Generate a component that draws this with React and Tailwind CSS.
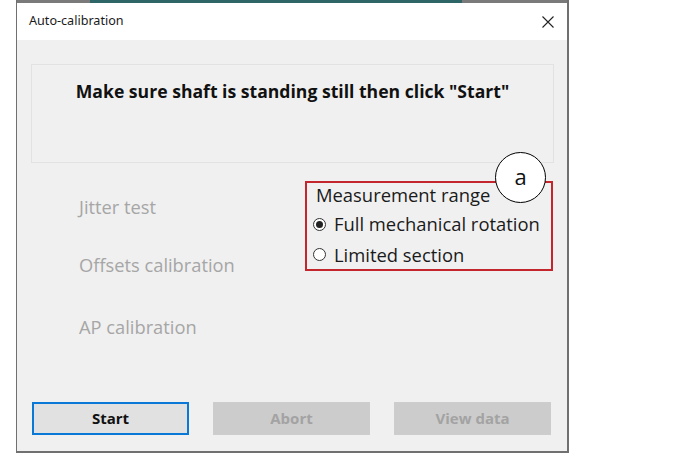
export default function App() {
  const font = { fontFamily: '"Open Sans", "Noto Sans", sans-serif' };
  return (
    <div className="w-[678px] h-[454px] bg-white overflow-hidden" style={font}>
      <div className="ml-[16px] w-[553px] h-[453px] flex flex-col border-l border-r-2 border-b-2 border-[#707070] bg-[#f0f0f0] relative">
        <div className="h-[3px] flex">
          <div className="w-[73px] bg-[#7a7a7a]" />
          <div className="w-[372px] bg-[#2e6566]" />
          <div className="flex-1 bg-[#7a7a7a]" />
        </div>
        <div className="h-[37px] bg-white flex items-center justify-between pl-[12px] pr-[12px]">
          <span className="text-[12.6px] text-[#1a1a1a]" style={{ fontFamily: '"Noto Sans", sans-serif' }}>Auto-calibration</span>
          <svg width="14" height="14" viewBox="0 0 14 14" className="mt-[1px]">
            <path d="M1.5 1.5 L12.5 12.5 M12.5 1.5 L1.5 12.5" stroke="#222" strokeWidth="1.1" fill="none" />
          </svg>
        </div>
        <div className="flex-1 flex flex-col px-[14px] pt-[24px]">
          <div className="h-[99px] w-[523px] border border-[#e2e2e2] flex justify-center pt-[14px]">
            <span className="text-[17.6px] leading-[24px] font-bold text-[#111]">Make sure shaft is standing still then click "Start"</span>
          </div>
          <div className="flex mt-[18px] h-[200px]">
            <div className="w-[274px] flex flex-col pl-[48px] pt-[14px] text-[18.3px] leading-[24px] text-[#a6a6a6]">
              <span className="h-[58px]">Jitter test</span>
              <span className="h-[62px]">Offsets calibration</span>
              <span>AP calibration</span>
            </div>
            <div className="w-[248px] h-[90px] border-2 border-[#c4262e] flex flex-col pl-[6px] text-[18.4px] text-[#1a1a1a] leading-[24px]">
              <span className="pl-[3px] h-[24px]">Measurement range</span>
              <label className="flex items-center gap-[8px] h-[30px] mt-[2px]">
                <span className="w-[13px] h-[13px] rounded-full border border-[#333] bg-white flex items-center justify-center">
                  <span className="w-[7px] h-[7px] rounded-full bg-[#222]" />
                </span>
                <span>Full mechanical rotation</span>
              </label>
              <label className="flex items-center gap-[8px] h-[29px] mt-[1px]">
                <span className="w-[13px] h-[13px] rounded-full border border-[#333] bg-white" />
                <span>Limited section</span>
              </label>
            </div>
          </div>
          <div className="flex gap-[24px] mt-[21px] pl-[1px]">
            <button className="w-[157px] h-[33px] border-2 border-[#0a78d7] bg-[#e1e1e1] text-[15px] font-bold text-[#111]">Start</button>
            <button className="w-[157px] h-[33px] border border-[#cdcdcd] bg-[#cccccc] text-[15px] font-bold text-[#a3a3a3]">Abort</button>
            <button className="w-[157px] h-[33px] border border-[#cdcdcd] bg-[#cccccc] text-[15px] font-bold text-[#a3a3a3]">View data</button>
          </div>
        </div>
        <div className="absolute left-[478px] top-[152px] w-[51px] h-[51px] rounded-full border border-black bg-white flex items-center justify-center text-[22px] text-[#111] leading-none pb-[3px]">a</div>
      </div>
    </div>
  );
}
